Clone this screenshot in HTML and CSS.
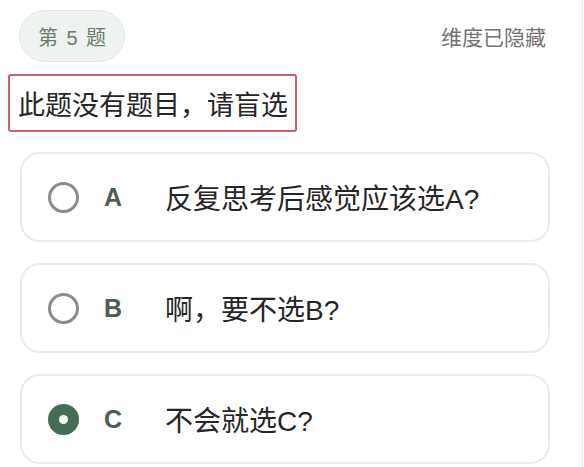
FILE: index.html
```html
<!DOCTYPE html>
<html lang="zh-CN">
<head>
  <meta charset="UTF-8" />
  <meta name="viewport" content="width=device-width, initial-scale=1" />
  <title>第 5 题</title>
  <link rel="stylesheet" href="styles.css">
</head>
<body>

<div id="page">
  <div class="top-row">
    <div class="badge">第 5 题</div>
    <div class="hint">维度已隐藏</div>
  </div>

  <div class="question">此题没有题目，请盲选</div>

  <div class="options">
    <div class="option">
      <span class="radio"></span>
      <span class="letter">A</span>
      <span class="label">反复思考后感觉应该选A?</span>
    </div>
    <div class="option">
      <span class="radio"></span>
      <span class="letter">B</span>
      <span class="label">啊，要不选B?</span>
    </div>
    <div class="option selected">
      <span class="radio"></span>
      <span class="letter">C</span>
      <span class="label">不会就选C?</span>
    </div>
  </div>
</div>

</body>
</html>
```

FILE: styles.css
```css
body {
  margin: 0;
  background: #fff;
  color: #222;
  font-family: "Liberation Sans", "Noto Sans CJK SC", sans-serif;
}
#page {
  width: 582px;
  height: 467px;
  border-right: 1px solid #ececec;
  overflow: hidden;
}
.top-row {
  display: flex;
  justify-content: space-between;
  align-items: center;
  padding: 10px 36px 0 19px;
}
.badge {
  box-sizing: border-box;
  height: 52px;
  width: 106px;
  display: flex;
  align-items: center;
  justify-content: center;
  border-radius: 26px;
  background: #eef3ef;
  border: 1px solid #dfe7e1;
  color: #6b7b70;
  font-size: 20px;
  word-spacing: 3px;
}
.hint {
  color: #737373;
  font-size: 21px;
}
.question {
  box-sizing: border-box;
  width: 289px;
  height: 58px;
  margin: 12px 0 0 8px;
  padding-left: 8px;
  display: flex;
  align-items: center;
  border: 2px solid #c7616a;
  border-radius: 3px;
  font-size: 27px;
  color: #262626;
  white-space: nowrap;
}
.options {
  display: flex;
  flex-direction: column;
  gap: 21px;
  margin: 20px 0 0 20px;
  width: 530px;
}
.option {
  box-sizing: border-box;
  height: 90px;
  display: flex;
  align-items: center;
  padding-left: 26px;
  border: 2px solid #ebebeb;
  border-radius: 20px;
  background: #fff;
}
.radio {
  box-sizing: border-box;
  width: 31px;
  height: 31px;
  border-radius: 50%;
  border: 3px solid #8c8c8c;
  margin-right: 25px;
  display: flex;
  align-items: center;
  justify-content: center;
  flex-shrink: 0;
}
.selected .radio {
  border: none;
  background: #456c54;
}
.selected .radio::after {
  content: "";
  width: 9px;
  height: 9px;
  border-radius: 50%;
  background: #f4f7f4;
}
.letter {
  width: 61px;
  font-weight: bold;
  font-size: 25px;
  color: #4d5e53;
}
.label {
  font-size: 28px;
  color: #262626;
}
```
